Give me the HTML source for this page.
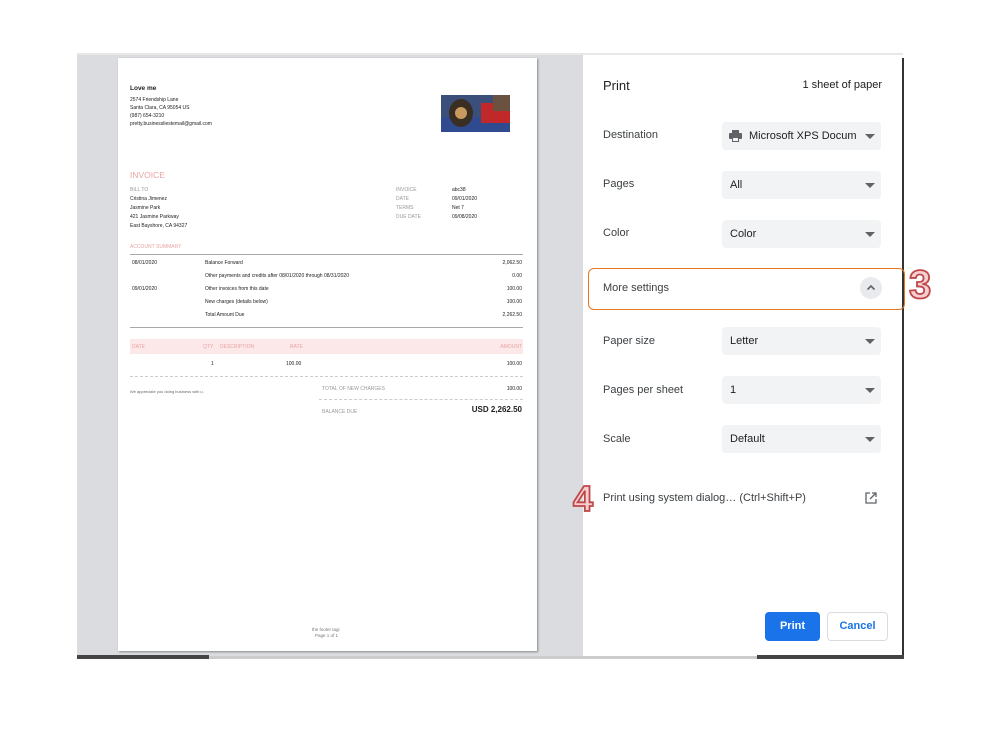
<!DOCTYPE html>
<html><head><meta charset="utf-8"><style>
*{margin:0;padding:0;box-sizing:border-box}
body{width:999px;height:749px;background:#fff;position:relative;overflow:hidden;font-family:"Liberation Sans",Arial,sans-serif;color:#202124}
.abs{position:absolute}
#gray{left:77px;top:54px;width:506px;height:603px;background:#dadce0}
#topline{left:77px;top:53px;width:826px;height:2px;background:#e8e8e8}
#page{left:118px;top:58px;width:419px;height:593px;background:#fff;box-shadow:1px 1px 2px #888}
#panel{left:583px;top:57px;width:320px;height:599px;background:#fff}
#rborder{left:902px;top:58px;width:2px;height:600px;background:#333}
.t{position:absolute;white-space:nowrap}
.s5{font-size:5px}
.lbl{font-size:11px;color:#3c4043}
.sel{position:absolute;left:722px;width:159px;height:28px;background:#f1f3f4;border-radius:4px;font-size:11px;color:#202124;padding:8px 0 0 8px}
.sel:after{content:"";position:absolute;right:6px;top:12px;border-left:5px solid transparent;border-right:5px solid transparent;border-top:5px solid #5f6368}
.pk{color:#e8a4a4}
.gr{color:#999}
.num{font-family:"Liberation Sans",Arial,sans-serif;font-weight:bold;color:#f6d0d0;-webkit-text-stroke:1.8px #c0474a}
</style></head><body>
<div class="abs" id="gray"></div>
<div class="abs" id="topline"></div>
<div class="abs" id="page"></div>
<div class="abs" id="panel"></div>
<div class="abs" id="rborder"></div>
<div class="abs" style="left:77px;top:655px;width:132px;height:4px;background:#444"></div>
<div class="abs" style="left:209px;top:656px;width:548px;height:3px;background:#ccc"></div>
<div class="abs" style="left:757px;top:655px;width:147px;height:4px;background:#444"></div>

<div class="t" style="left:130px;top:85px;font-size:6.5px;font-weight:bold">Love me</div>
<div class="t s5" style="left:130px;top:97px">2574 Friendship Lane</div>
<div class="t s5" style="left:130px;top:105px">Santa Clara, CA 95054 US</div>
<div class="t s5" style="left:130px;top:113px">(987) 654-3210</div>
<div class="t s5" style="left:130px;top:121px">pretty.businessliestemail@gmail.com</div>
<div class="abs" style="left:441px;top:95px;width:69px;height:37px;background:#3a4f7a;overflow:hidden">
 <div class="abs" style="left:0;top:22px;width:69px;height:15px;background:#2f4a8f"></div>
 <div class="abs" style="left:40px;top:8px;width:29px;height:20px;background:#c0282a"></div>
 <div class="abs" style="left:52px;top:0;width:17px;height:16px;background:#6b5240"></div>
 <div class="abs" style="left:8px;top:4px;width:24px;height:28px;border-radius:50%;background:#3a2d22"></div>
 <div class="abs" style="left:14px;top:12px;width:12px;height:12px;border-radius:50%;background:#c89a5f"></div>
</div>
<div class="t pk" style="left:130px;top:170px;font-size:8.5px">INVOICE</div>
<div class="t s5 gr" style="left:130px;top:187px">BILL TO</div>
<div class="t s5" style="left:130px;top:196px">Cristina Jimenez</div>
<div class="t s5" style="left:130px;top:205px">Jasmine Park</div>
<div class="t s5" style="left:130px;top:214px">421 Jasmine Parkway</div>
<div class="t s5" style="left:130px;top:223px">East Bayshore, CA 94327</div>
<div class="t s5 gr" style="left:396px;top:187px">INVOICE</div>
<div class="t s5 gr" style="left:396px;top:196px">DATE</div>
<div class="t s5 gr" style="left:396px;top:205px">TERMS</div>
<div class="t s5 gr" style="left:396px;top:214px">DUE DATE</div>
<div class="t s5" style="left:452px;top:187px">abc38</div>
<div class="t s5" style="left:452px;top:196px">09/01/2020</div>
<div class="t s5" style="left:452px;top:205px">Net 7</div>
<div class="t s5" style="left:452px;top:214px">09/08/2020</div>
<div class="t s5 pk" style="left:130px;top:244px">ACCOUNT SUMMARY</div>
<div class="abs" style="left:130px;top:254px;width:393px;height:1px;background:#aaa"></div>
<div class="t s5" style="left:132px;top:260px">08/01/2020</div>
<div class="t s5" style="left:205px;top:260px">Balance Forward</div>
<div class="t s5" style="left:205px;top:273px">Other payments and credits after 08/01/2020 through 08/31/2020</div>
<div class="t s5" style="left:132px;top:286px">09/01/2020</div>
<div class="t s5" style="left:205px;top:286px">Other invoices from this date</div>
<div class="t s5" style="left:205px;top:299px">New charges (details below)</div>
<div class="t s5" style="left:205px;top:312px">Total Amount Due</div>
<div class="t s5" style="right:477px;top:260px">2,062.50</div>
<div class="t s5" style="right:477px;top:273px">0.00</div>
<div class="t s5" style="right:477px;top:286px">100.00</div>
<div class="t s5" style="right:477px;top:299px">100.00</div>
<div class="t s5" style="right:477px;top:312px">2,262.50</div>
<div class="abs" style="left:130px;top:327px;width:393px;height:1px;background:#aaa"></div>
<div class="abs" style="left:130px;top:339px;width:393px;height:15px;background:#fce8e8"></div>
<div class="t s5 pk" style="left:132px;top:344px">DATE</div>
<div class="t s5 pk" style="left:203px;top:344px">QTY</div>
<div class="t s5 pk" style="left:220px;top:344px">DESCRIPTION</div>
<div class="t s5 pk" style="left:290px;top:344px">RATE</div>
<div class="t s5 pk" style="right:477px;top:344px">AMOUNT</div>
<div class="t s5" style="left:211px;top:361px">1</div>
<div class="t s5" style="left:286px;top:361px">100.00</div>
<div class="t s5" style="right:477px;top:361px">100.00</div>
<div class="abs" style="left:130px;top:376px;width:393px;border-top:1px dashed #ccc"></div>
<div class="t" style="left:130px;top:389px;font-size:4px;color:#666">We appreciate you doing business with u.</div>
<div class="t s5 gr" style="left:322px;top:386px">TOTAL OF NEW CHARGES</div>
<div class="t s5" style="right:477px;top:386px">100.00</div>
<div class="abs" style="left:319px;top:399px;width:204px;border-top:1px dashed #ccc"></div>
<div class="t s5 gr" style="left:322px;top:409px">BALANCE DUE</div>
<div class="t" style="right:477px;top:405px;font-size:8px;font-weight:bold">USD 2,262.50</div>
<div class="t" style="left:312px;top:627px;font-size:4.5px;color:#777">the footer tagi</div>
<div class="t" style="left:315px;top:633px;font-size:4.5px;color:#777">Page 1 of 1</div>

<div class="t" style="left:603px;top:78px;font-size:13px;color:#202124">Print</div>
<div class="t" style="right:117px;top:79px;font-size:11px;color:#202124">1 sheet of paper</div>
<div class="t lbl" style="left:603px;top:129px">Destination</div>
<div class="sel" style="top:122px;padding-left:27px">Microsoft XPS Docum
 <svg class="abs" style="left:7px;top:8px" width="13" height="12" viewBox="0 0 13 12"><rect x="3" y="0" width="7" height="3" fill="#5f6368"/><rect x="0" y="3" width="13" height="6" rx="1" fill="#5f6368"/><rect x="3" y="7" width="7" height="5" fill="#5f6368"/><rect x="4" y="8" width="5" height="3" fill="#f1f3f4"/></svg></div>
<div class="t lbl" style="left:603px;top:178px">Pages</div>
<div class="sel" style="top:171px">All</div>
<div class="t lbl" style="left:603px;top:227px">Color</div>
<div class="sel" style="top:220px">Color</div>
<div class="abs" style="left:588px;top:268px;width:317px;height:42px;border:1.5px solid #e87722;border-radius:6px"></div>
<div class="t lbl" style="left:603px;top:282px">More settings</div>
<div class="abs" style="left:860px;top:277px;width:22px;height:22px;border-radius:50%;background:#e8eaed"></div>
<svg class="abs" style="left:866px;top:284px" width="10" height="7" viewBox="0 0 10 7"><path d="M1.5 5.5 L5 2 L8.5 5.5" stroke="#5f6368" stroke-width="1.6" fill="none"/></svg>
<div class="t num" style="left:909px;top:263px;font-size:40px">3</div>
<div class="t lbl" style="left:603px;top:335px">Paper size</div>
<div class="sel" style="top:327px">Letter</div>
<div class="t lbl" style="left:603px;top:384px">Pages per sheet</div>
<div class="sel" style="top:376px">1</div>
<div class="t lbl" style="left:603px;top:433px">Scale</div>
<div class="sel" style="top:425px">Default</div>
<div class="t num" style="left:573px;top:478px;font-size:36px">4</div>
<div class="t lbl" style="left:603px;top:492px">Print using system dialog… (Ctrl+Shift+P)</div>
<svg class="abs" style="left:865px;top:492px" width="12" height="12" viewBox="0 0 12 12"><path d="M5 1H1V11H11V7" stroke="#5f6368" stroke-width="1.3" fill="none"/><path d="M7 1H11V5M11 1L5 7" stroke="#5f6368" stroke-width="1.3" fill="none"/></svg>
<div class="abs" style="left:765px;top:612px;width:55px;height:29px;background:#1a73e8;border-radius:4px;color:#fff;font-size:11px;font-weight:bold;text-align:center;line-height:29px">Print</div>
<div class="abs" style="left:827px;top:612px;width:61px;height:29px;background:#fff;border:1px solid #dadce0;border-radius:4px;color:#1a73e8;font-size:11px;font-weight:bold;text-align:center;line-height:27px">Cancel</div>
</body></html>
